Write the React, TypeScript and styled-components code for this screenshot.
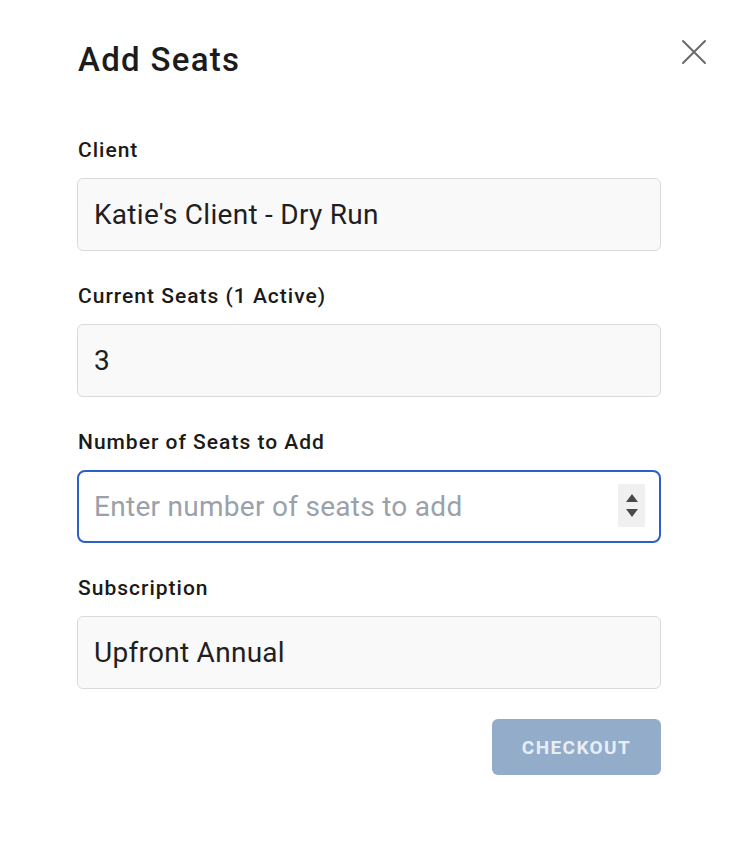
import React from "react";
import styled, { createGlobalStyle } from "styled-components";

const Global = createGlobalStyle`
  html, body { margin: 0; padding: 0; background: #ffffff; }
  body { font-family: Roboto, "Liberation Sans", Arial, sans-serif; color: #1f1f1f; }
  * { box-sizing: border-box; }
`;

const Dialog = styled.div`
  position: relative;
  width: 740px;
  min-height: 854px;
  padding: 38px 0 0 77px;
`;

const Title = styled.h1`
  margin: 0 0 0 1px;
  font-size: 33px;
  font-weight: 500;
  line-height: 44px;
  color: #1c1c1c;
  letter-spacing: 1.3px;
`;

const CloseButton = styled.button`
  position: absolute;
  top: 36px;
  right: 30px;
  width: 32px;
  height: 32px;
  padding: 0;
  border: none;
  background: transparent;
  display: flex;
  align-items: center;
  justify-content: center;
  cursor: pointer;
`;

const Form = styled.div`
  margin-top: 54px;
  width: 584px;
  display: flex;
  flex-direction: column;
  gap: 31px;
`;

const Field = styled.div`
  display: flex;
  flex-direction: column;
  gap: 14px;
`;

const Label = styled.label`
  padding-left: 1px;
  font-size: 21px;
  font-weight: 500;
  line-height: 28px;
  letter-spacing: 1px;
  color: #1a1a1a;
`;

const InputWrap = styled.div`
  position: relative;
`;

const TextInput = styled.input<{ $focused?: boolean }>`
  width: 100%;
  height: 73px;
  padding: 0 ${(p) => (p.$focused ? "50px" : "16px")} 0 ${(p) => (p.$focused ? "15px" : "16px")};
  font-family: Roboto, "Liberation Sans", Arial, sans-serif;
  font-size: 28px;
  letter-spacing: 0.28px;
  color: #1f1f1f;
  background: ${(p) => (p.$focused ? "#ffffff" : "#f9f9f9")};
  border: ${(p) => (p.$focused ? "2px solid #2b60c8" : "1px solid #dadada")};
  border-radius: ${(p) => (p.$focused ? "8px" : "6px")};
  outline: none;
  &::placeholder { color: #9aa1ab; }
`;

const Spinner = styled.div`
  position: absolute;
  top: 14px;
  right: 16px;
  width: 27px;
  height: 43px;
  background: #f0f0f0;
  display: flex;
  flex-direction: column;
  align-items: center;
  justify-content: center;
  gap: 7px;
`;

const Actions = styled.div`
  display: flex;
  justify-content: flex-end;
  margin-top: -1px;
`;

const Checkout = styled.button`
  width: 169px;
  height: 56px;
  border: none;
  border-radius: 6px;
  background: #92acc9;
  color: #e9eef4;
  font-family: Roboto, "Liberation Sans", Arial, sans-serif;
  font-size: 19px;
  font-weight: 700;
  letter-spacing: 1.4px;
  text-transform: uppercase;
`;

export default function App() {
  return (
    <>
      <Global />
      <Dialog>
        <Title>Add Seats</Title>
        <CloseButton aria-label="Close">
          <svg width="26" height="26" viewBox="0 0 26 26">
            <path d="M2 2 L24 24 M24 2 L2 24" stroke="#6b6b6b" strokeWidth="2" strokeLinecap="round" />
          </svg>
        </CloseButton>
        <Form>
          <Field>
            <Label>Client</Label>
            <TextInput readOnly value="Katie's Client - Dry Run" />
          </Field>
          <Field>
            <Label>Current Seats (1 Active)</Label>
            <TextInput readOnly value="3" />
          </Field>
          <Field>
            <Label>Number of Seats to Add</Label>
            <InputWrap>
              <TextInput $focused placeholder="Enter number of seats to add" />
              <Spinner>
                <svg width="12" height="8" viewBox="0 0 12 8">
                  <path d="M6 0 L12 8 L0 8 Z" fill="#4a4a4a" />
                </svg>
                <svg width="12" height="8" viewBox="0 0 12 8">
                  <path d="M0 0 L12 0 L6 8 Z" fill="#4a4a4a" />
                </svg>
              </Spinner>
            </InputWrap>
          </Field>
          <Field>
            <Label>Subscription</Label>
            <TextInput readOnly value="Upfront Annual" />
          </Field>
          <Actions>
            <Checkout>Checkout</Checkout>
          </Actions>
        </Form>
      </Dialog>
    </>
  );
}
